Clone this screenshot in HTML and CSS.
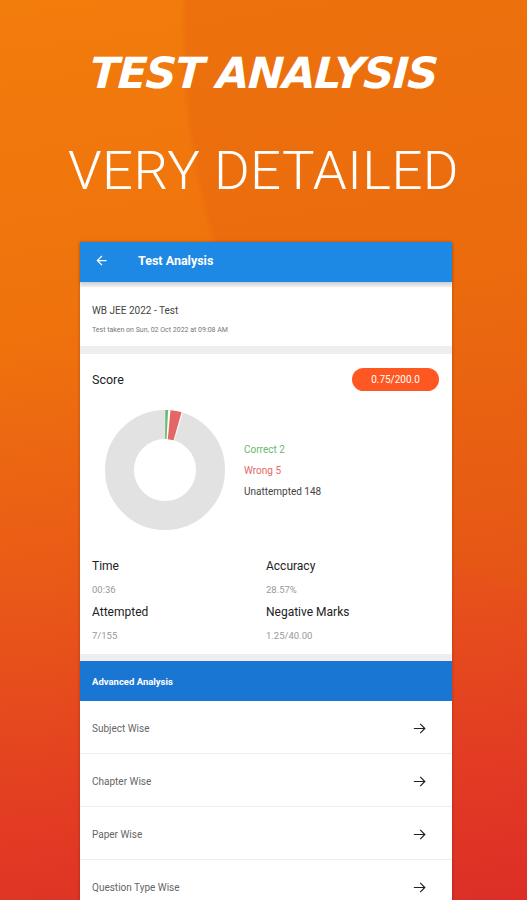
FILE: index.html
```html
<!DOCTYPE html>
<html>
<head>
<meta charset="utf-8">
<link rel="stylesheet" href="styles.css">
</head>
<body>
<header class="promo">
  <h1 class="promo-title">TEST ANALYSIS</h1>
  <h2 class="promo-sub">VERY DETAILED</h2>
</header>
<main class="phone">
  <div class="appbar">
    <svg class="back" viewBox="0 0 24 24" width="15" height="15"><path d="M20 11H7.83l5.59-5.59L12 4l-8 8 8 8 1.41-1.41L7.83 13H20v-2z" fill="#fff"/></svg>
    <span class="appbar-title">Test Analysis</span>
  </div>
  <section class="test-card">
    <div class="test-name">WB JEE 2022 - Test</div>
    <div class="test-date">Test taken on Sun, 02 Oct 2022 at 09:08 AM</div>
  </section>
  <section class="score-card">
    <div class="score-head">
      <span class="score-label">Score</span>
      <span class="score-pill">0.75/200.0</span>
    </div>
    <div class="chart-row">
      <svg class="donut" viewBox="0 0 120 120" width="120" height="120">
        <g transform="rotate(-90 60 60)">
          <circle cx="60" cy="60" r="45.5" fill="none" stroke="#e2e2e2" stroke-width="29"/>
          <circle cx="60" cy="60" r="45.5" fill="none" stroke="#fff" stroke-width="29" stroke-dasharray="14.4 271.5" stroke-dashoffset="0.6"/>
          <circle cx="60" cy="60" r="45.5" fill="none" stroke="#66bb6a" stroke-width="29" stroke-dasharray="2.2 283.7" stroke-dashoffset="-0.2"/>
          <circle cx="60" cy="60" r="45.5" fill="none" stroke="#e46767" stroke-width="29" stroke-dasharray="8.6 277.3" stroke-dashoffset="-4.2"/>
        </g>
      </svg>
      <ul class="legend">
        <li class="lg-correct">Correct 2</li>
        <li class="lg-wrong">Wrong 5</li>
        <li class="lg-un">Unattempted 148</li>
      </ul>
    </div>
    <div class="stats">
      <div class="stat"><div class="stat-label">Time</div><div class="stat-val">00:36</div></div>
      <div class="stat"><div class="stat-label">Accuracy</div><div class="stat-val">28.57%</div></div>
      <div class="stat"><div class="stat-label">Attempted</div><div class="stat-val">7/155</div></div>
      <div class="stat"><div class="stat-label">Negative Marks</div><div class="stat-val">1.25/40.00</div></div>
    </div>
  </section>
  <div class="adv-bar">Advanced Analysis</div>
  <ul class="adv-list">
    <li class="adv-row"><span>Subject Wise</span><svg class="fwd" viewBox="0 0 24 24" width="17" height="17"><path d="M4 12h15M13 5.5l6.5 6.5-6.5 6.5" fill="none" stroke="#222" stroke-width="1.7"/></svg></li>
    <li class="adv-row"><span>Chapter Wise</span><svg class="fwd" viewBox="0 0 24 24" width="17" height="17"><path d="M4 12h15M13 5.5l6.5 6.5-6.5 6.5" fill="none" stroke="#222" stroke-width="1.7"/></svg></li>
    <li class="adv-row"><span>Paper Wise</span><svg class="fwd" viewBox="0 0 24 24" width="17" height="17"><path d="M4 12h15M13 5.5l6.5 6.5-6.5 6.5" fill="none" stroke="#222" stroke-width="1.7"/></svg></li>
    <li class="adv-row"><span>Question Type Wise</span><svg class="fwd" viewBox="0 0 24 24" width="17" height="17"><path d="M4 12h15M13 5.5l6.5 6.5-6.5 6.5" fill="none" stroke="#222" stroke-width="1.7"/></svg></li>
  </ul>
</main>
</body>
</html>
```
FILE: styles.css
```css
html, body {
  margin: 0;
  padding: 0;
}
body {
  width: 527px;
  height: 900px;
  overflow: hidden;
  font-family: Roboto, "Liberation Sans", sans-serif;
  background:
    radial-gradient(ellipse 440px 580px at 620px 30px, rgba(226, 92, 14, 0.32) 0, rgba(226, 92, 14, 0.32) 98.5%, rgba(226, 92, 14, 0) 100%),
    linear-gradient(172deg, #f27c0c 0%, #ef720d 35%, #e95a17 60%, #e33f22 82%, #dc2e27 100%);
}
.promo {
  text-align: center;
  color: #fff;
  padding-top: 43px;
  height: 199px;
  box-sizing: border-box;
}
.promo-title {
  margin: 0;
  font-family: "DejaVu Sans", "Liberation Sans", sans-serif;
  font-weight: bold;
  font-style: italic;
  font-size: 43px;
  letter-spacing: -1.5px;
  line-height: 60px;
  transform: skewX(-3deg);
}
.promo-sub {
  margin: 37px 0 0 0;
  font-family: Roboto, "Liberation Sans", sans-serif;
  font-weight: 300;
  font-size: 54.5px;
  line-height: 60px;
  letter-spacing: 0.4px;
}
.phone {
  width: 372px;
  margin: 43px 0 0 80px;
  background: #eeeeee;
  box-shadow: 0 0 3px rgba(0,0,0,0.25);
}
.appbar {
  height: 40px;
  box-sizing: border-box;
  padding-bottom: 3px;
  background: #1e88e5;
  display: flex;
  align-items: center;
  padding-left: 14px;
  box-shadow: 0 2px 3px rgba(0,0,0,0.15);
}
.appbar-title {
  color: #fff;
  font-weight: bold;
  font-size: 12.5px;
  margin-left: 29px;
}
.back { display: block; }
.test-card {
  margin-top: 5px;
  background: #fff;
  height: 59px;
  padding-left: 12px;
  box-sizing: border-box;
  padding-top: 17px;
}
.test-name {
  font-size: 10px;
  color: #444;
  line-height: 14px;
}
.test-date {
  font-size: 7px;
  color: #777;
  line-height: 10px;
  margin-top: 7px;
}
.score-card {
  margin-top: 8px;
  background: #fff;
  height: 300px;
  box-sizing: border-box;
  padding-top: 14px;
}
.score-head {
  display: flex;
  justify-content: space-between;
  align-items: center;
  padding: 0 13px 0 12px;
}
.score-label {
  font-size: 12.5px;
  color: #222;
}
.score-pill {
  width: 87px;
  height: 23px;
  border-radius: 12px;
  background: #ff5722;
  color: #fff;
  font-size: 10px;
  display: flex;
  align-items: center;
  justify-content: center;
}
.chart-row {
  display: flex;
  align-items: center;
  margin-top: 19px;
  padding-left: 25px;
}
.donut { display: block; }
.legend {
  list-style: none;
  margin: 0 0 0 19px;
  padding: 0;
  font-size: 10px;
  line-height: 21px;
}
.lg-correct { color: #66bb6a; }
.lg-wrong { color: #e46767; }
.lg-un { color: #444; }
.stats {
  display: grid;
  grid-template-columns: 174px 1fr;
  padding-left: 12px;
  margin-top: 25px;
}
.stat-label {
  font-size: 12px;
  color: #222;
  line-height: 23px;
}
.stat-val {
  font-size: 9.5px;
  color: #999;
  line-height: 23px;
}
.adv-bar {
  margin-top: 7px;
  height: 40px;
  background: #1976d2;
  color: #fff;
  font-weight: bold;
  font-size: 9.5px;
  display: flex;
  align-items: center;
  padding-left: 12px;
}
.adv-list {
  list-style: none;
  margin: 0;
  padding: 0;
  background: #fff;
}
.adv-row {
  height: 52px;
  border-bottom: 1px solid #eeeeee;
  display: flex;
  align-items: center;
  justify-content: space-between;
  padding: 2px 24px 0 12px;
  box-sizing: content-box;
  font-size: 10px;
  color: #666;
}
.adv-row {
  height: 50px;
}
.fwd { display: block; }
```
